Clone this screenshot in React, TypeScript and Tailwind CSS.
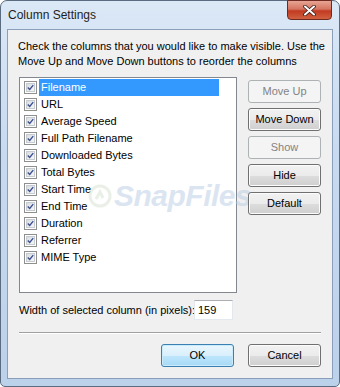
import { useState } from "react";

const COLUMNS = [
  "Filename",
  "URL",
  "Average Speed",
  "Full Path Filename",
  "Downloaded Bytes",
  "Total Bytes",
  "Start Time",
  "End Time",
  "Duration",
  "Referrer",
  "MIME Type",
];

function CheckBox({ checked }: { checked: boolean }) {
  return (
    <div className="w-[13px] h-[13px] border border-[#8e8f8f] bg-white p-[1px] shrink-0">
      <div className="w-full h-full border border-[#c6cbd2] bg-gradient-to-br from-[#d9dde2] to-[#f6f6f6] flex items-center justify-center">
        {checked && (
          <svg width="9" height="9" viewBox="0 0 9 9">
            <path d="M1 4.5 L3.5 7 L8 1.5" fill="none" stroke="#3c4f8f" strokeWidth="1.8" />
          </svg>
        )}
      </div>
    </div>
  );
}

function Button({
  label,
  disabled,
  primary,
}: {
  label: string;
  disabled?: boolean;
  primary?: boolean;
}) {
  if (disabled) {
    return (
      <div className="relative w-[73px] h-[23px] rounded-[3px] border border-[#adb2b5] bg-[#f4f4f4] text-[#838383] flex items-center justify-center">
        {label}
      </div>
    );
  }
  return (
    <div
      className={
        primary
          ? "relative w-[73px] h-[23px] rounded-[3px] border border-[#3c7fb1] bg-[linear-gradient(#eaf6fd_0%,#d9f0fc_50%,#bee6fd_51%,#a7d9f5_100%)] flex items-center justify-center shadow-[inset_0_0_0_1px_#c8ecfc]"
          : "relative w-[73px] h-[23px] rounded-[3px] border border-[#707070] bg-[linear-gradient(#f2f2f2_0%,#ebebeb_50%,#dddddd_51%,#cfcfcf_100%)] flex items-center justify-center shadow-[inset_0_0_0_1px_#fcfcfc]"
      }
    >
      {label}
    </div>
  );
}

export default function App() {
  const [selected] = useState(0);

  return (
    <div className="w-[340px] h-[387px] bg-white font-['Liberation_Sans',sans-serif] text-[11px] text-black whitespace-nowrap">
      <div className="relative w-[340px] h-[387px] rounded-t-[7px] rounded-b-[5px] border border-[#5b6c81] bg-[linear-gradient(#dbe8f6,#c7daf0_40%,#bcd1ea)] flex flex-col">
        {/* title bar */}
        <div className="h-[28px] flex items-center pl-[7px] text-[12px] text-[#1e1e1e]">
          Column Settings
        </div>
        <div className="absolute right-[7px] top-[-1px] w-[45px] h-[20px] rounded-b-[4px] border border-[#6e2a20] bg-[linear-gradient(#e8a493,#d47561_45%,#c23a22_55%,#d0613f)] flex items-center justify-center">
          <svg width="13" height="11" viewBox="0 0 13 11">
            <path
              d="M2 1.5 L11 9.5 M11 1.5 L2 9.5"
              stroke="#3a1a14"
              strokeWidth="3.6"
              strokeLinecap="round"
            />
            <path
              d="M2 1.5 L11 9.5 M11 1.5 L2 9.5"
              stroke="#ffffff"
              strokeWidth="2"
              strokeLinecap="round"
            />
          </svg>
        </div>

        {/* client area */}
        <div className="mx-[6px] h-[350px] border border-[#8b9fbb] bg-[#f0f0f0] relative">
          <div className="px-[10px] pt-[9px] leading-[15px]">
            <p>Check the columns that you would like to make visible. Use the</p>
            <p>Move Up and Move Down buttons to reorder the columns</p>
          </div>

          <div className="flex mt-[8px] pl-[11px] gap-[11px]">
            <div className="w-[218px] h-[216px] border border-[#828790] bg-white pt-[1px]">
              {COLUMNS.map((c, i) => (
                <div key={c} className="h-[17px] flex items-center">
                  <div className="pl-[4px] pr-[2px]">
                    <CheckBox checked />
                  </div>
                  <div
                    className={
                      i === selected
                        ? "w-[180px] h-[17px] bg-[#3399ff] text-white pl-[2px] flex items-center"
                        : "w-[180px] h-[17px] pl-[2px] flex items-center"
                    }
                  >
                    {c}
                  </div>
                </div>
              ))}
            </div>
            <div className="flex flex-col gap-[5px] pt-[3px] relative z-10">
              <Button label="Move Up" disabled />
              <Button label="Move Down" />
              <Button label="Show" disabled />
              <Button label="Hide" />
              <Button label="Default" />
            </div>
          </div>

          <div className="flex items-center pl-[11px] mt-[7px] h-[20px]">
            <span className="w-[175px]">Width of selected column (in pixels):</span>
            <div className="w-[39px] h-[20px] border border-[#e3e9ef] border-t-[#abadb3] bg-white flex items-center pl-[3px]">
              159
            </div>
          </div>

          <div className="mx-[11px] mt-[12px] border-t border-[#a0a0a0] border-b border-b-white" />

          <div className="flex justify-end gap-[14px] pr-[11px] mt-[10px]">
            <Button label="OK" primary />
            <Button label="Cancel" />
          </div>

          {/* watermark */}
          <div className="absolute left-[80px] top-[143px] flex items-center gap-[2px] pointer-events-none opacity-50">
            <svg width="24" height="24" viewBox="0 0 24 24">
              <circle cx="12" cy="12" r="10" fill="none" stroke="#d6e3d0" strokeWidth="3" />
              <path d="M8 15 L12 8 L15 14" fill="none" stroke="#d6e3d0" strokeWidth="3" />
            </svg>
            <span className="font-['Liberation_Sans',sans-serif] italic font-bold text-[30px] text-[#b8cde4] tracking-[-0.5px]">
              SnapFiles
            </span>
          </div>
        </div>
      </div>
    </div>
  );
}
